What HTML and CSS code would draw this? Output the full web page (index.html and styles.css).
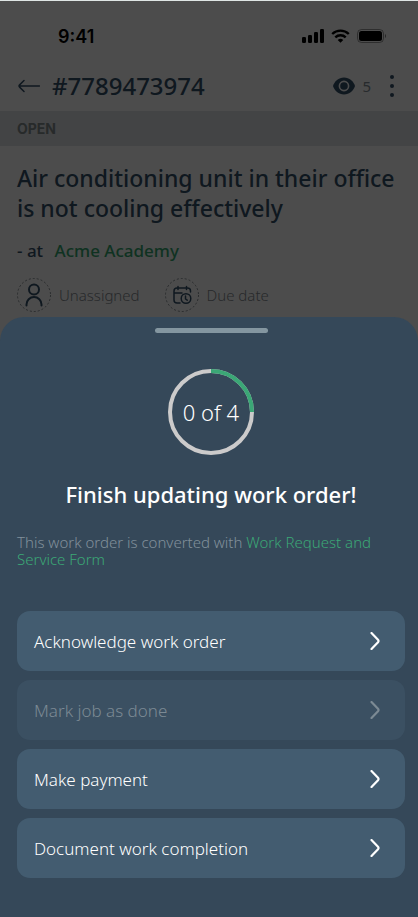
FILE: index.html
```html
<!DOCTYPE html>
<html lang="en">
<head>
	<meta charset="utf-8">
	<meta name="viewport" content="width=device-width, initial-scale=1">
	<title>Work order #7789473974</title>
	<link rel="stylesheet" href="styles.css">
</head>
<body>
	<main class="order">
		<div class="statusbar">
			<span class="time">9:41</span>
			<svg width="22" height="14" viewBox="0 0 22 14"><rect x="0" y="8" width="4" height="6" rx="1.200"/><rect x="6" y="6" width="4" height="8" rx="1.200"/><rect x="12" y="3" width="4" height="11" rx="1.200"/><rect x="18" y="0" width="4" height="14" rx="1.200"/></svg>
			<svg width="19" height="14" viewBox="0 0 19 14"><path d="M1.200 5a12 12 0 0 1 16.600 0M4.300 8.300a7.500 7.500 0 0 1 10.400 0" fill="none" stroke="#000" stroke-width="2.400"/><path d="M9.500 13.800L6.700 11a4 4 0 0 1 5.600 0z"/></svg>
			<svg width="29" height="14" viewBox="0 0 29 14"><rect x=".5" y=".5" width="26" height="13" rx="4" fill="none" stroke="#000" stroke-opacity=".4"/><rect x="2" y="2" width="23" height="10" rx="2.500"/><path d="M28 5v4q1-.5 1-2t-1-2z" opacity=".5"/></svg>
		</div>
		<header class="topbar">
			<button class="icon-btn" aria-label="Back"><svg width="22" height="14" viewBox="0 0 22 14"><path d="M21.500 7H1M6 1.500L1.600 5.900q-1.100 1.100 0 2.200L6 12.500" class="line"/></svg></button>
			<h1>#7789473974</h1>
			<svg width="22" height="18" viewBox="0 0 22 18"><path d="M11 .5C5.500.5 1.500 4.500 0 9c1.500 4.500 5.500 8.500 11 8.500S20.500 13.500 22 9C20.500 4.500 16.500.5 11 .5z"/><circle cx="11" cy="9" r="4.600" fill="none" stroke="#fff" stroke-width="1.600"/></svg>
			<span class="views">5</span>
			<button class="icon-btn" aria-label="More"><svg width="4" height="22" viewBox="0 0 4 22"><circle cx="2" cy="2" r="2"/><circle cx="2" cy="11" r="2"/><circle cx="2" cy="20" r="2"/></svg></button>
		</header>
		<div class="state">OPEN</div>
		<div class="summary">
			<h2>Air conditioning unit in their office is not cooling effectively</h2>
			<p class="place">- at <a href="#">Acme Academy</a></p>
			<div class="meta">
				<svg width="34" height="34" viewBox="0 0 34 34"><circle cx="17" cy="17" r="16.500" class="dash"/><circle cx="17" cy="11.500" r="5" class="line"/><path d="M9.500 27.500v-1a7.500 7.500 0 0 1 15 0v1" class="line"/></svg>
				<span class="who">Unassigned</span>
				<svg width="34" height="34" viewBox="0 0 34 34"><circle cx="17" cy="17" r="16.500" class="dash"/><path d="M15 25h-3a3 3 0 0 1-3-3V13a3 3 0 0 1 3-3h10.500a3 3 0 0 1 3 3v1M9 15h8M13 8.500v3M21.500 8.500v3" class="thin"/><circle cx="21" cy="20.500" r="4.800" class="thin"/><path d="M20.500 18v3l1.700 1.200" class="thin"/></svg>
				<span>Due date</span>
			</div>
		</div>
	</main>

	<section class="sheet">
		<div class="handle"></div>
		<div class="progress">
			<svg width="86" height="86" viewBox="0 0 86 86"><circle cx="43" cy="43" r="41" class="track"/><path d="M43 2a41 41 0 0 1 41 41" class="done"/></svg>
			<span>0 of 4</span>
		</div>
		<h2>Finish updating work order!</h2>
		<p class="note">This work order is converted with <a href="#">Work Request and Service Form</a></p>
		<div class="steps">
			<button class="step">Acknowledge work order<svg width="10" height="18" viewBox="0 0 10 18"><path d="M1.500 1l6.500 6.800q1 1.200 0 2.400L1.500 17"/></svg></button>
			<button class="step" disabled>Mark job as done<svg width="10" height="18" viewBox="0 0 10 18"><path d="M1.500 1l6.500 6.800q1 1.200 0 2.400L1.500 17"/></svg></button>
			<button class="step">Make payment<svg width="10" height="18" viewBox="0 0 10 18"><path d="M1.500 1l6.500 6.800q1 1.200 0 2.400L1.500 17"/></svg></button>
			<button class="step">Document work completion<svg width="10" height="18" viewBox="0 0 10 18"><path d="M1.500 1l6.500 6.800q1 1.200 0 2.400L1.500 17"/></svg></button>
		</div>
	</section>
</body>
</html>
```
FILE: styles.css
```css
* {box-sizing:border-box;}
body {margin:0;min-height:100vh;display:flex;flex-direction:column;font-family:"Noto Sans",sans-serif;background:#354859;color:#34566f;border-top:1px solid #dfe5e4;}
h1, h2, p {margin:0;font-weight:500;}
a {color:#34a870;text-decoration:none;}
button {font:inherit;color:inherit;background:none;border:0;padding:0;}
svg {display:block;flex:none;}

/* dimmed work order behind the sheet */
.order {position:relative;background:#fff;padding-bottom:30px;color:#34506a;}
.order::after {content:"";position:absolute;inset:0;background:rgba(0,0,0,0.7);}
.statusbar {display:flex;align-items:center;gap:7px;height:70px;padding:0 32px 0 58px;}
.time {flex:1;font:600 18px "Inter",sans-serif;color:#000;}
.topbar {display:flex;align-items:center;height:40px;padding:0 24px 10px 18px;}
.topbar svg {fill:#34506a;}
.topbar h1 {flex:1;margin-left:12px;font-size:24px;line-height:30px;}
.views {margin:0 19px 0 7px;font-size:15px;color:#838d96;}
.line, .thin {fill:none;stroke:#34506a;stroke-width:2;stroke-linecap:round;stroke-linejoin:round;}
.thin {stroke-width:1.5;}
.topbar .line {fill:none;stroke-width:1.5;}
.state {padding:0 17px;background:#e1e3e8;font:700 14px/35px "Inter",sans-serif;color:#838d8e;}
.summary {padding:17px 17px 0;}
.summary h2 {font-size:23px;line-height:30px;}
.place {margin-top:16px;font-size:17px;line-height:24px;}
.place a {margin-left:7px;}
.meta {display:flex;align-items:center;margin-top:15px;font-size:15px;font-weight:300;color:#848a8f;}
.meta span {margin-left:8px;}
.who {margin-right:25px;}
.dash {fill:none;stroke:#8a9096;stroke-dasharray:2 2;}

.sheet {position:relative;flex:1;margin-top:-25px;padding:11px 13px 39px 17px;border-radius:24px 24px 0 0;background:#354859;color:#fff;}
.handle {width:113px;height:5px;margin:0 auto;border-radius:3px;background:#8496a0;}
.progress {display:grid;place-items:center;margin-top:36px;font-size:22px;font-weight:300;line-height:28px;}
.progress > * {grid-area:1/1;}
.track, .done {fill:none;stroke:#cccbcb;stroke-width:4;}
.done {stroke:#3ba776;}
.sheet h2 {margin-top:24px;font-size:22px;line-height:30px;text-align:center;}
.note {margin-top:25px;font-size:15px;line-height:17px;font-weight:300;color:#81909b;}
.note a {color:#3ba776;}
.steps {display:grid;gap:9px;margin-top:43px;}
.step {display:flex;align-items:center;justify-content:space-between;height:60px;padding:0 25px 0 17px;border-radius:13px;background:#435c70;color:#fff;font-size:17px;font-weight:300;}
.step path {fill:none;stroke:currentColor;stroke-width:2.2;stroke-linecap:round;}
.step:disabled {background:#3b5062;color:#7c8a94;}
```
